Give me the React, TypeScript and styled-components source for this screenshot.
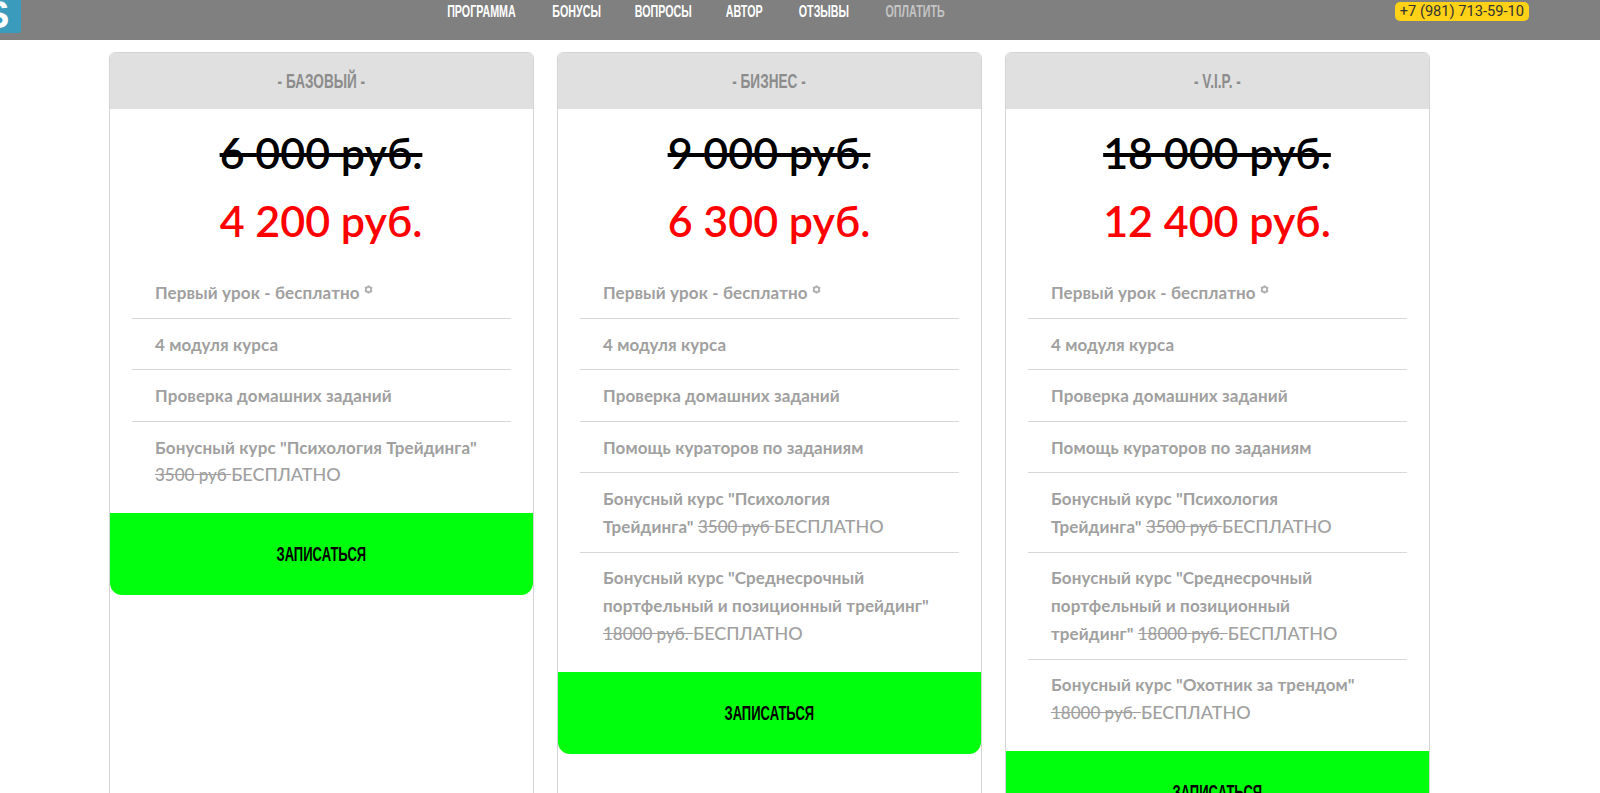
import * as React from "react";
import styled, { createGlobalStyle } from "styled-components";

const Global = createGlobalStyle`
  html, body {
    margin: 0;
    height: 793px;
    overflow: hidden;
    background: #fff;
    font-family: "Lato", "Open Sans", sans-serif;
  }
`;

const TopBar = styled.header`
  display: flex;
  align-items: flex-start;
  height: 40px;
  background: #808080;
`;

const Logo = styled.div`
  width: 21px;
  height: 33px;
  background: #3a9bbd;
  border-bottom-right-radius: 2px;
  overflow: hidden;
  color: #fff;
  font: 700 38px/30px "Liberation Sans", sans-serif;
  text-indent: -16px;
`;

const Menu = styled.nav`
  display: flex;
  gap: 37px;
  margin-left: 426px;
  height: 24px;
`;

const MenuLink = styled.a<{ $w: number; $muted?: boolean }>`
  display: flex;
  justify-content: center;
  align-items: center;
  width: ${(p) => p.$w}px;
  color: ${(p) => (p.$muted ? "#c4c4c4" : "#fff")};
  white-space: nowrap;
`;

const Narrow = styled.span<{ $size: number; $scale: number }>`
  display: inline-block;
  font-family: "Liberation Sans", sans-serif;
  font-weight: 700;
  font-size: ${(p) => p.$size}px;
  transform: scaleX(${(p) => p.$scale});
  white-space: nowrap;
`;

const Phone = styled.a`
  margin: 2px 71px 0 auto;
  height: 19px;
  padding: 0 5px;
  border-radius: 5px;
  background: #ffd117;
  color: #333;
  font: 400 14.65px/19px "Roboto", sans-serif;
`;

const Plans = styled.main`
  display: flex;
  align-items: flex-start;
  gap: 23px;
  margin: 12px 0 0 108.5px;
`;

const Card = styled.section`
  width: 425px;
  min-height: 800px;
  box-sizing: border-box;
  border: 1px solid #d4d4d4;
  border-radius: 6px 6px 0 0;
`;

const CardHead = styled.div`
  display: flex;
  justify-content: center;
  align-items: center;
  height: 56px;
  background: #e0e0e0;
  border-radius: 5px 5px 0 0;
  color: #8c8c8c;
`;

const OldPrice = styled.div`
  margin-top: 18px;
  text-align: center;
  color: #000;
  font-size: 43px;
  font-weight: 600;
  line-height: 52px;
  text-decoration: line-through;
`;

const NewPrice = styled.div`
  margin-top: 16px;
  text-align: center;
  color: #f00;
  font-size: 43px;
  font-weight: 600;
  line-height: 52px;
`;

const Features = styled.ul`
  list-style: none;
  margin: 20.5px 22px 0;
  padding: 0;
`;

const Feature = styled.li`
  padding: 11.6px 0 11.1px 23.5px;
  border-bottom: 1px solid #d8d8d8;
  color: #a0a0a0;
  font-size: 17px;
  font-weight: 700;
  letter-spacing: 0.1px;
  line-height: 27.8px;

  &:last-child {
    border-bottom: 0;
    padding-bottom: 24.2px;
  }
`;

const Struck = styled.s`
  font-weight: 500;
  letter-spacing: 0;
`;

const Free = styled.span`
  font-weight: 500;
  font-size: 18px;
  letter-spacing: 0;
`;

const Mark = styled.svg`
  width: 9px;
  height: 9px;
  margin-left: 4px;
  vertical-align: 5px;
`;

const Enroll = styled.a`
  display: flex;
  justify-content: center;
  align-items: center;
  height: 82px;
  background: #00ff0d;
  border-radius: 0 0 12px 12px;
  color: #000;
`;

const FlowerMark = () => (
  <Mark viewBox="0 0 10 10">
    <circle cx="5" cy="5" r="3" fill="none" stroke="#b0b0b0" strokeWidth="2" />
    <circle cx="5" cy="1.3" r="1.1" fill="#b0b0b0" />
    <circle cx="5" cy="8.7" r="1.1" fill="#b0b0b0" />
    <circle cx="1.8" cy="3.1" r="1.1" fill="#b0b0b0" />
    <circle cx="8.2" cy="3.1" r="1.1" fill="#b0b0b0" />
    <circle cx="1.8" cy="6.9" r="1.1" fill="#b0b0b0" />
    <circle cx="8.2" cy="6.9" r="1.1" fill="#b0b0b0" />
  </Mark>
);

const menu: { label: string; w: number; muted?: boolean }[] = [
  { label: "ПРОГРАММА", w: 69 },
  { label: "БОНУСЫ", w: 47 },
  { label: "ВОПРОСЫ", w: 53 },
  { label: "АВТОР", w: 35 },
  { label: "ОТЗЫВЫ", w: 50 },
  { label: "ОПЛАТИТЬ", w: 58, muted: true },
];

const curators = "Помощь кураторов по заданиям";

const psychologyShort = (
  <>
    Бонусный курс "Психология Трейдинга"
    <br />
    <Struck>3500 руб </Struck>
    <Free>БЕСПЛАТНО</Free>
  </>
);

const psychology = (
  <>
    Бонусный курс "Психология Трейдинга"{"\u00a0"}
    <Struck>3500{"\u00a0"}руб </Struck>
    <Free>БЕСПЛАТНО</Free>
  </>
);

const midTerm = (
  <>
    Бонусный курс "Среднесрочный портфельный и позиционный трейдинг"
    <br />
    <Struck>18000 руб. </Struck>
    <Free>БЕСПЛАТНО</Free>
  </>
);

const midTermJoined = (
  <>
    Бонусный курс "Среднесрочный портфельный и позиционный трейдинг"{"\u00a0"}
    <Struck>18000{"\u00a0"}руб. </Struck>
    <Free>БЕСПЛАТНО</Free>
  </>
);

const hunter = (
  <>
    Бонусный курс "Охотник за трендом"
    <br />
    <Struck>18000 руб. </Struck>
    <Free>БЕСПЛАТНО</Free>
  </>
);

const plans = [
  {
    name: "- БАЗОВЫЙ -",
    oldPrice: "6 000 руб.",
    price: "4 200 руб.",
    extras: [psychologyShort],
  },
  {
    name: "- БИЗНЕС -",
    oldPrice: "9 000 руб.",
    price: "6 300 руб.",
    extras: [curators, psychology, midTerm],
  },
  {
    name: "- V.I.P. -",
    oldPrice: "18 000 руб.",
    price: "12 400 руб.",
    extras: [curators, psychology, midTermJoined, hunter],
  },
];

export default function App() {
  return (
    <>
      <Global />
      <TopBar>
        <Logo>S</Logo>
        <Menu>
          {menu.map((item) => (
            <MenuLink key={item.label} $w={item.w} $muted={item.muted}>
              <Narrow $size={17} $scale={0.63}>
                {item.label}
              </Narrow>
            </MenuLink>
          ))}
        </Menu>
        <Phone>+7 (981) 713-59-10</Phone>
      </TopBar>
      <Plans>
        {plans.map((plan) => (
          <Card key={plan.name}>
            <CardHead>
              <Narrow $size={20} $scale={0.68}>
                {plan.name}
              </Narrow>
            </CardHead>
            <OldPrice>{plan.oldPrice}</OldPrice>
            <NewPrice>{plan.price}</NewPrice>
            <Features>
              <Feature>
                Первый урок - бесплатно
                <FlowerMark />
              </Feature>
              <Feature>4 модуля курса</Feature>
              <Feature>Проверка домашних заданий</Feature>
              {plan.extras.map((extra, i) => (
                <Feature key={i}>{extra}</Feature>
              ))}
            </Features>
            <Enroll>
              <Narrow $size={21} $scale={0.62}>
                ЗАПИСАТЬСЯ
              </Narrow>
            </Enroll>
          </Card>
        ))}
      </Plans>
    </>
  );
}
